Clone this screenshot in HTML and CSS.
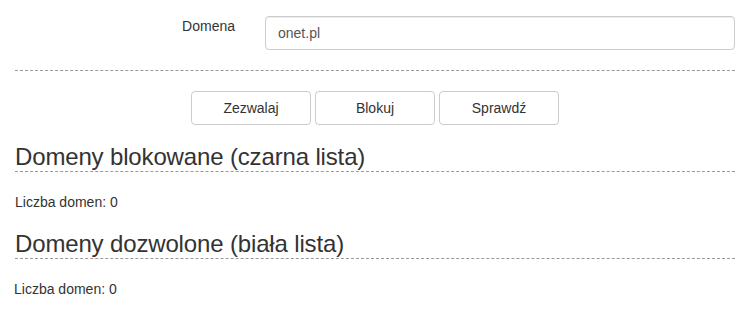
FILE: index.html
```html
<!DOCTYPE html>
<html lang="pl">
<head>
<meta charset="utf-8">
<title>Domeny</title>
<link rel="stylesheet" href="styles.css">
</head>
<body>
<div class="page">
  <form class="domain-form">
    <div class="form-row">
      <label class="form-label" for="domain">Domena</label>
      <div class="form-field">
        <input id="domain" class="form-input" type="text" value="onet.pl">
      </div>
    </div>
    <hr class="divider">
    <div class="actions">
      <button type="button" class="btn">Zezwalaj</button>
      <button type="button" class="btn">Blokuj</button>
      <button type="button" class="btn">Sprawdź</button>
    </div>
  </form>
  <section class="list first">
    <h3 class="list-title">Domeny blokowane (czarna lista)</h3>
    <p class="list-count">Liczba domen: 0</p>
  </section>
  <section class="list second">
    <h3 class="list-title">Domeny dozwolone (biała lista)</h3>
    <p class="list-count shifted">Liczba domen: 0</p>
  </section>
</div>
</body>
</html>
```
FILE: styles.css
```css
* { box-sizing: border-box; }
html, body { margin: 0; padding: 0; background: #fff; }
body {
  font-family: "Liberation Sans", Arial, sans-serif;
  font-size: 14px;
  line-height: 20px;
  color: #333;
}
.page { padding: 16px 15px 0 15px; }
.domain-form { margin: 0; }
.form-row { display: flex; }
.form-label {
  width: 220px;
  text-align: right;
  padding-top: 0;
  line-height: 20px;
  color: #333;
}
.form-field { flex: 1; padding-left: 30px; }
.form-input {
  display: block;
  width: 100%;
  height: 34px;
  padding: 6px 12px;
  font-family: inherit;
  font-size: 14px;
  line-height: 20px;
  color: #555;
  background: #fff;
  border: 1px solid #ccc;
  border-radius: 4px;
  box-shadow: inset 0 1px 1px rgba(0,0,0,.075);
  outline: none;
}
.divider {
  margin: 20px 0 0 0;
  border: 0;
  border-top: 1px dashed #999;
  height: 0;
}
.actions {
  display: flex;
  justify-content: center;
  gap: 4px;
  margin-top: 20px;
}
.btn {
  width: 120px;
  height: 34px;
  padding: 6px 12px;
  font-family: inherit;
  font-size: 14px;
  line-height: 20px;
  color: #333;
  background: #fff;
  border: 1px solid #ccc;
  border-radius: 4px;
}
.list-title {
  margin: 19px 0 0 0;
  font-size: 24px;
  font-weight: 500;
  line-height: 26px;
  letter-spacing: -0.15px;
  padding-bottom: 1px;
  border-bottom: 1px dashed #999;
  color: #333;
}
.list-count { margin: 20px 0 0 0; }
.shifted { margin-left: -1px; }
```
